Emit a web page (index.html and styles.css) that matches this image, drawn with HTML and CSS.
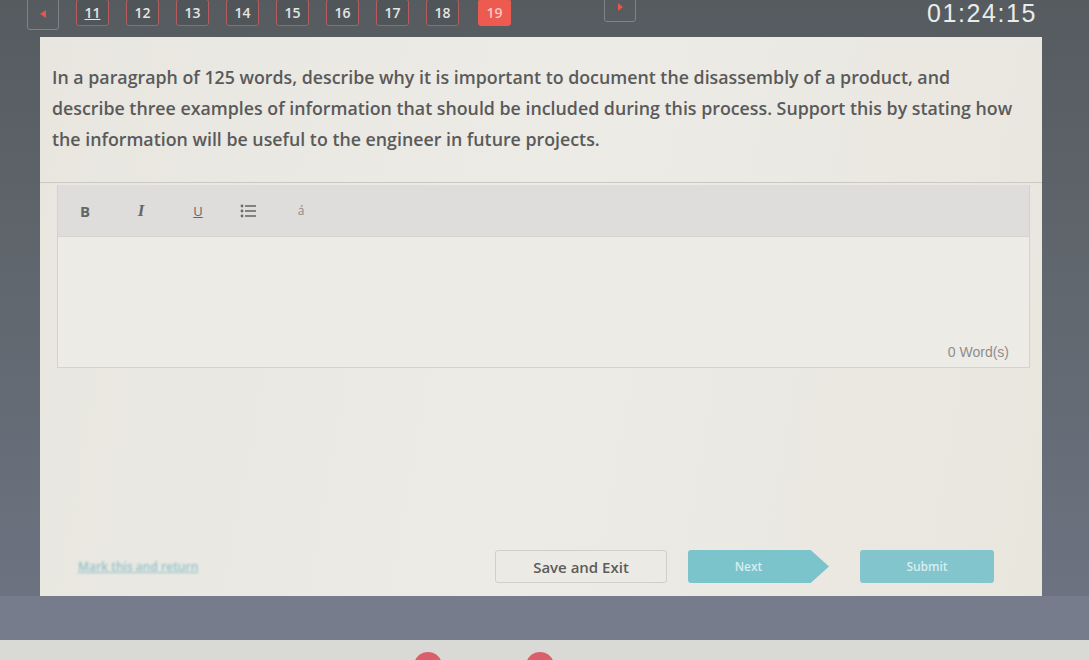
FILE: index.html
```html
<!DOCTYPE html>
<html>
<head>
<meta charset="utf-8">
<link rel="stylesheet" href="styles.css">
</head>
<body>
<div class="screen">
  <header class="topbar">
    <div class="nav">
      <button class="navbtn prev"><span class="tri tri-left"></span></button>
      <button class="qbtn"><u>11</u></button>
      <button class="qbtn">12</button>
      <button class="qbtn">13</button>
      <button class="qbtn">14</button>
      <button class="qbtn">15</button>
      <button class="qbtn">16</button>
      <button class="qbtn">17</button>
      <button class="qbtn">18</button>
      <button class="qbtn current">19</button>
      <button class="navbtn next"><span class="tri tri-right"></span></button>
    </div>
    <div class="timer">01:24:15</div>
  </header>

  <main class="card">
    <p class="question">In a paragraph of 125 words, describe why it is important to document the disassembly of a product, and<br>describe three examples of information that should be included during this process. Support this by stating how<br>the information will be useful to the engineer in future projects.</p>

    <section class="editor">
      <div class="toolbar">
        <span class="tool bold">B</span>
        <span class="tool italic">I</span>
        <span class="tool under">U</span>
        <span class="tool list">
          <svg width="16" height="14" viewBox="0 0 16 14"><g fill="#6a6a6a"><circle cx="2" cy="2" r="1.4"/><circle cx="2" cy="7" r="1.4"/><circle cx="2" cy="12" r="1.4"/><rect x="5" y="1.2" width="11" height="1.6"/><rect x="5" y="6.2" width="11" height="1.6"/><rect x="5" y="11.2" width="11" height="1.6"/></g></svg>
        </span>
        <span class="tool accent">á</span>
      </div>
      <div class="body"></div>
      <div class="count">0 Word(s)</div>
    </section>

    <footer class="actions">
      <a class="mark">Mark this and return</a>
      <div class="btns">
        <button class="btn save">Save and Exit</button>
        <button class="btn nextq">Next</button>
        <button class="btn submit">Submit</button>
      </div>
    </footer>
  </main>

  <div class="band"></div>
  <div class="strip">
    <span class="dot d1"></span>
    <span class="dot d2"></span>
  </div>
</div>
</body>
</html>
```

FILE: styles.css
```css
* { box-sizing: border-box; }
html, body { margin: 0; padding: 0; }
body {
  width: 1089px;
  height: 660px;
  overflow: hidden;
  background: linear-gradient(180deg, #555b5f 0%, #60666d 40%, #6c7280 90%);
  font-family: "Open Sans", "Liberation Sans", sans-serif;
}
.screen { display: flex; flex-direction: column; height: 660px; }

.topbar {
  height: 37px;
  display: flex;
  justify-content: space-between;
  align-items: flex-start;
  padding: 0 52px 0 27px;
}
.nav { display: flex; align-items: flex-start; gap: 17px; }
button { font-family: inherit; cursor: pointer; }
.navbtn {
  width: 32px;
  height: 32px;
  margin-top: -2px;
  background: transparent;
  border: 1.5px solid #7e8487;
  border-radius: 3px;
  display: flex;
  align-items: center;
  justify-content: center;
  padding: 0;
}
.navbtn.next { height: 24px; margin-left: 76px; }
.tri { width: 0; height: 0; display: block; }
.tri-left { border-top: 4px solid transparent; border-bottom: 4px solid transparent; border-right: 6px solid #e8554c; }
.tri-right { border-top: 4px solid transparent; border-bottom: 4px solid transparent; border-left: 5px solid #e8554c; margin-top: -6px; }

.qbtn {
  width: 33px;
  height: 27px;
  margin-top: -1px;
  background: #4f5558;
  border: 1.5px solid #b65d5c;
  border-radius: 3px;
  color: #e6e6e4;
  font-size: 14px;
  font-weight: 600;
  padding: 0;
  display: flex;
  align-items: center;
  justify-content: center;
}
.qbtn.current { background: #ec5a50; border-color: #ec5a50; color: #f7c9c4; margin-left: 2px; }
.timer {
  color: #ebebe8;
  font-family: "Liberation Sans", Arial, sans-serif;
  font-size: 25px;
  letter-spacing: 1.6px;
  line-height: 26px;
  margin-top: 0;
}

.card {
  margin-left: 40px;
  width: 1002px;
  height: 559px;
  background: linear-gradient(100deg, #e8e6df 0%, #ecebe6 50%, #e9e6de 100%);
  display: flex;
  flex-direction: column;
  overflow: hidden;
}
.question {
  margin: 0;
  padding: 25px 0 27px 12px;
  color: #5a5a5a;
  font-size: 17.8px;
  font-weight: 600;
  line-height: 31px;
  white-space: nowrap;
  border-bottom: 1.5px solid #c9c8c3;
}
.editor {
  margin: 2px 12px 0 17px;
  display: flex;
  flex-direction: column;
  border: 1px solid #d3d2cd;
  border-top: none;
  height: 183px;
}
.toolbar {
  height: 51px;
  background: #dedddb;
  display: flex;
  align-items: center;
  padding-left: 17px;
}
.tool {
  color: #666;
  font-size: 15px;
  display: inline-flex;
  justify-content: center;
  width: 20px;
}
.bold { font-weight: 700; }
.italic { font-style: italic; font-family: "Liberation Serif", serif; font-weight: 700; font-size: 17px; margin-left: 36px; }
.under { text-decoration: underline; font-size: 13px; margin-left: 37px; }
.list { margin-left: 30px; }
.accent { margin-left: 33px; color: #8a8a8a; font-size: 12px; }
.body { flex: 1; background: #edebe5; border-top: 1px solid #d5d4d0; }
.count {
  background: #edebe5;
  text-align: right;
  padding: 0 20px 6px 0;
  color: #8d8d8d;
  font-family: "Liberation Sans", sans-serif;
  font-size: 14px;
  line-height: 18px;
}

.actions {
  margin-top: auto;
  margin-bottom: 13px;
  display: flex;
  align-items: center;
  justify-content: space-between;
  padding: 0 48px 0 38px;
}
.mark {
  color: #92c2ca;
  font-size: 12px;
  font-weight: 600;
  text-decoration: underline;
  filter: blur(0.8px);
}
.btns { display: flex; align-items: center; }
.btn {
  height: 33px;
  border: none;
  font-size: 14px;
  font-weight: 600;
  padding: 0;
}
.save {
  width: 172px;
  background: #eceae5;
  border: 1.5px solid #d0cfcb;
  border-radius: 3px;
  color: #5c5c5c;
  font-size: 15px;
}
.nextq {
  width: 141px;
  margin-left: 21px;
  background: #7cc4cc;
  color: #d5eef1;
  clip-path: polygon(0 0, 87% 0, 100% 50%, 87% 100%, 0 100%);
  border-radius: 3px;
  padding-right: 20px;
  font-size: 12px;
}
.submit {
  width: 134px;
  margin-left: 31px;
  background: #82c5cc;
  color: #d6eef0;
  border-radius: 3px;
  font-size: 12px;
}

.band { height: 44px; background: #767c8b; }
.strip {
  flex: 1;
  background: #d9d9d6;
  position: relative;
  overflow: hidden;
}
.dot {
  position: absolute;
  width: 28px;
  height: 28px;
  border-radius: 50%;
  background: #d9606a;
  top: 12px;
}
.d1 { left: 414px; }
.d2 { left: 526px; }
```
